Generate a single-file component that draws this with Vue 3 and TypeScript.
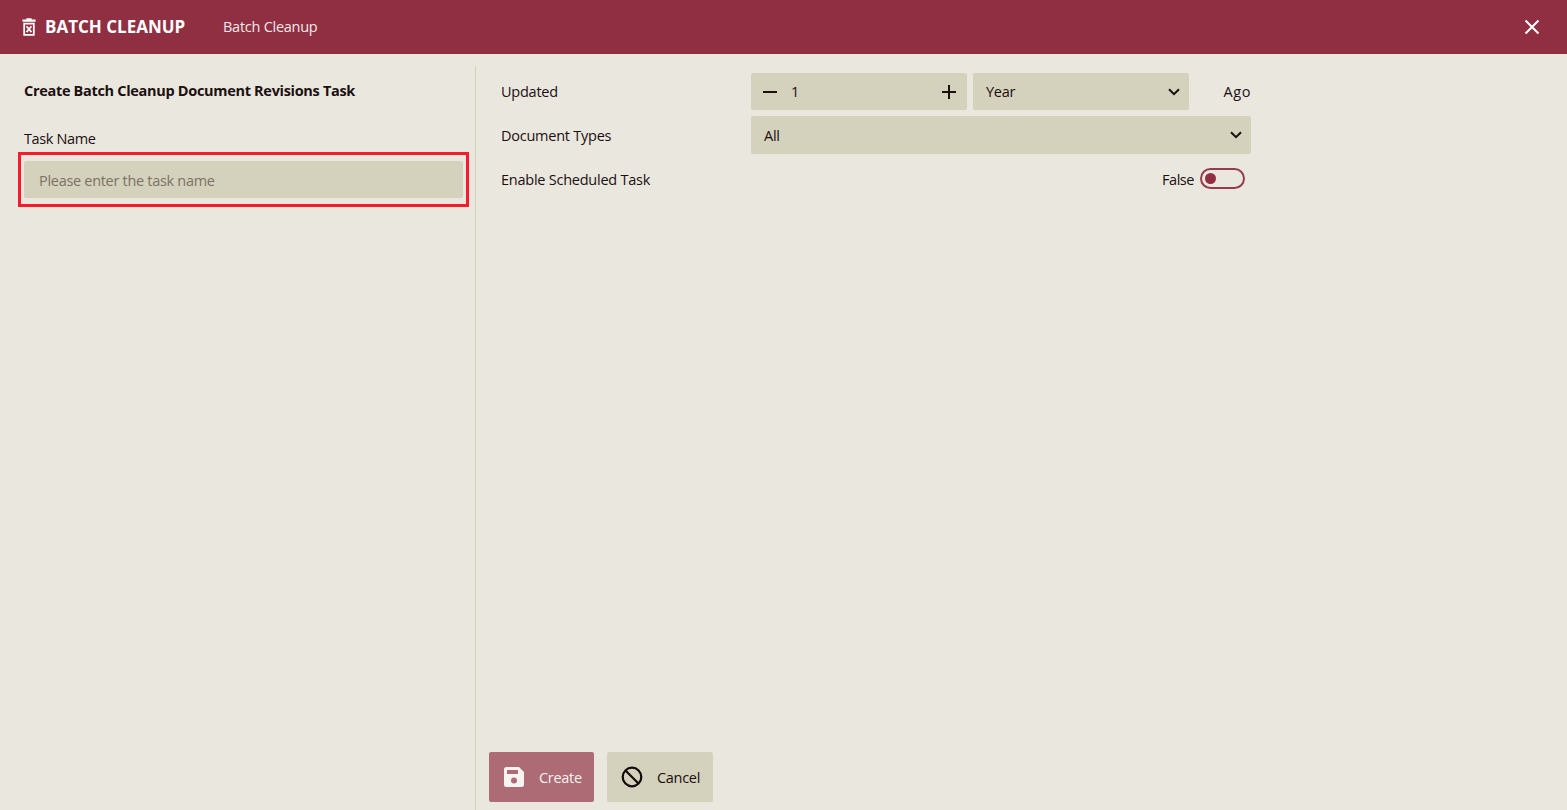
<template>
  <div class="page">
    <header class="topbar">
      <div class="brand">
        <svg class="brand-icon" viewBox="0 0 16 20" width="14" height="18">
          <path fill="#fff" d="M5 0h6v1.5h4.5V4H.5V1.5H5z" />
          <path fill="#fff" fill-rule="evenodd" d="M1.5 5h13v15h-13zM3.5 7v11h9V7z" />
          <path fill="none" stroke="#fff" stroke-width="2" d="M5.2 9.2l5.6 6.6M10.8 9.2l-5.6 6.6" />
        </svg>
        <span class="brand-title">BATCH CLEANUP</span>
      </div>
      <span class="crumb">Batch Cleanup</span>
      <svg class="close" viewBox="0 0 16 16" width="16" height="16">
        <path fill="none" stroke="#fff" stroke-width="2.1" d="M1.5 1.5l13 13M14.5 1.5l-13 13" />
      </svg>
    </header>

    <main class="content">
      <aside class="side">
        <h2 class="side-title">Create Batch Cleanup Document Revisions Task</h2>
        <label class="side-label">Task Name</label>
        <div class="highlight">
          <input class="name-input" type="text" placeholder="Please enter the task name" />
        </div>
      </aside>

      <section class="main">
        <div class="form">
          <div class="row row-updated">
            <span class="row-label">Updated</span>
            <div class="row-control">
              <div class="field stepper">
                <svg viewBox="0 0 16 16" width="16" height="16">
                  <path stroke="#1c0f10" stroke-width="2" d="M1 8h14" />
                </svg>
                <span class="stepper-value">1</span>
                <svg class="stepper-plus" viewBox="0 0 16 16" width="16" height="16">
                  <path stroke="#1c0f10" stroke-width="2" d="M1 8h14M8 1v14" />
                </svg>
              </div>
              <div class="field select">
                <span>{{ unit }}</span>
                <svg class="chevron" viewBox="0 0 12 8" width="12" height="8">
                  <path fill="none" stroke="#1c0f10" stroke-width="2" d="M1 1.2l5 5 5-5" />
                </svg>
              </div>
              <span class="ago">Ago</span>
            </div>
          </div>

          <div class="row row-types">
            <span class="row-label">Document Types</span>
            <div class="row-control">
              <div class="field select select-wide">
                <span>All</span>
                <svg class="chevron" viewBox="0 0 12 8" width="12" height="8">
                  <path fill="none" stroke="#1c0f10" stroke-width="2" d="M1 1.2l5 5 5-5" />
                </svg>
              </div>
            </div>
          </div>

          <div class="row row-toggle">
            <span class="row-label">Enable Scheduled Task</span>
            <div class="row-control toggle-wrap">
              <span class="toggle-label">{{ enabled ? "True" : "False" }}</span>
              <div class="toggle"><div class="toggle-dot" /></div>
            </div>
          </div>
        </div>

        <div class="actions">
          <button class="btn btn-create">
            <svg viewBox="0 0 20 20" width="20" height="20">
              <path
                fill="#f7f3f0"
                fill-rule="evenodd"
                d="M2.5 0H15l5 5v12.5A2.5 2.5 0 0 1 17.500 20h-15A2.500 2.500 0 0 1 0 17.500v-15A2.500 2.500 0 0 1 2.500 0zM3 3v4h11V3zM10 10.500a3 3 0 1 0 0 6 3 3 0 0 0 0-6z"
              />
            </svg>
            <span>Create</span>
          </button>
          <button class="btn btn-cancel">
            <svg viewBox="0 0 22 22" width="22" height="22">
              <circle cx="11" cy="11" r="9.300" fill="none" stroke="#140a0a" stroke-width="2.200" />
              <path stroke="#140a0a" stroke-width="2.200" d="M4.500 4.500l13 13" />
            </svg>
            <span>Cancel</span>
          </button>
        </div>
      </section>
    </main>
  </div>
</template>

<script setup lang="ts">
import { ref } from "vue";

const unit = ref("Year");
const enabled = ref(false);
</script>

<style>
html,
body {
  margin: 0;
  height: 100%;
  overflow: hidden;
}
</style>

<style scoped>
.page {
  display: flex;
  flex-direction: column;
  height: 810px;
  background: #eae7df;
  color: #1c0f10;
  font-family: "Open Sans", "Noto Sans", sans-serif;
  font-size: 14px;
}

.topbar {
  display: flex;
  align-items: center;
  flex: 0 0 54px;
  padding: 0 27.500px 0 22px;
  background: #902e42;
  color: #fff;
}

.brand {
  display: flex;
  align-items: center;
  gap: 9px;
  width: 201px;
}

.brand-icon {
  margin-top: -1px;
}

.brand-title {
  margin-top: -2px;
  font-size: 17px;
  font-weight: 700;
  letter-spacing: 0;
}

.crumb {
  margin-top: -2px;
  font-size: 14.500px;
  letter-spacing: -0.26px;
  color: #f3e9ea;
}

.close {
  margin-left: auto;
}

.content {
  display: flex;
  flex: 1;
  min-height: 0;
  padding-top: 12px;
}

.side {
  display: flex;
  flex-direction: column;
  width: 476px;
  box-sizing: border-box;
  padding: 14px 7px 0 18px;
  border-right: 1px solid #d4d1bc;
}

.side-title {
  margin: 0 0 0 6px;
  font-size: 14.500px;
  line-height: 22px;
  font-weight: 700;
  letter-spacing: -0.31px;
}

.side-label {
  margin: 26px 0 2px 6px;
  font-size: 14.500px;
  line-height: 22px;
  letter-spacing: -0.38px;
}

.highlight {
  display: flex;
  box-sizing: border-box;
  width: 451px;
  padding: 6px 3px;
  border: 3px solid #f61c2c;
}

.name-input {
  flex: 1;
  height: 37px;
  box-sizing: border-box;
  padding: 2px 15px 0;
  border: none;
  border-radius: 2px;
  outline: none;
  background: #d4d1bc;
  font-family: inherit;
  font-size: 14.500px;
  letter-spacing: -0.3px;
  color: #1c0f10;
}

.name-input::placeholder {
  color: #7b7266;
  opacity: 1;
}

.main {
  display: flex;
  flex: 1;
  flex-direction: column;
  justify-content: space-between;
  min-width: 0;
  padding: 7px 0 8px 13px;
}

.row {
  display: flex;
  align-items: center;
  margin-left: 12px;
  font-size: 14.500px;
  letter-spacing: -0.24px;
}

.row-label {
  flex: 0 0 250px;
}

.row-control {
  display: flex;
  align-items: center;
  width: 500px;
}

.row-updated {
  height: 37px;
}

.row-types {
  height: 38px;
  margin-top: 6px;
}

.row-toggle {
  height: 22px;
  margin-top: 14px;
}

.field {
  display: flex;
  align-items: center;
  box-sizing: border-box;
  height: 37px;
  border-radius: 2px;
  background: #d4d1bc;
}

.stepper {
  width: 216px;
  padding: 0 10px 0 11px;
}

.stepper-value {
  margin-left: 13px;
}

.stepper-plus {
  margin-left: auto;
}

.select {
  justify-content: space-between;
  width: 216px;
  margin-left: 6px;
  padding: 0 9px 0 13px;
}

.select-wide {
  width: 500px;
  height: 38px;
  margin-left: 0;
}

.ago {
  margin-left: auto;
  letter-spacing: 0.6px;
}

.toggle-wrap {
  justify-content: flex-end;
  padding-right: 6px;
  box-sizing: border-box;
}

.toggle-label {
  margin-right: 6px;
  letter-spacing: -0.45px;
}

.toggle {
  display: flex;
  align-items: center;
  box-sizing: border-box;
  width: 45px;
  height: 21px;
  margin-top: -2px;
  padding-left: 3px;
  border: 2px solid #963b4d;
  border-radius: 11px;
}

.toggle-dot {
  width: 11px;
  height: 11px;
  border-radius: 50%;
  background: #902e42;
}

.actions {
  display: flex;
  gap: 13px;
}

.btn {
  display: flex;
  align-items: center;
  height: 50px;
  box-sizing: border-box;
  border: none;
  border-radius: 2px;
  font-family: inherit;
  font-size: 14.500px;
  letter-spacing: -0.3px;
}

.btn-create {
  gap: 15px;
  width: 105px;
  padding: 0 0 0 15px;
  background: #ad6b75;
  color: #f7f3f0;
}

.btn-cancel {
  gap: 14px;
  width: 106px;
  padding: 0 0 0 14px;
  background: #d4d1bc;
  color: #1c0f10;
}
</style>
